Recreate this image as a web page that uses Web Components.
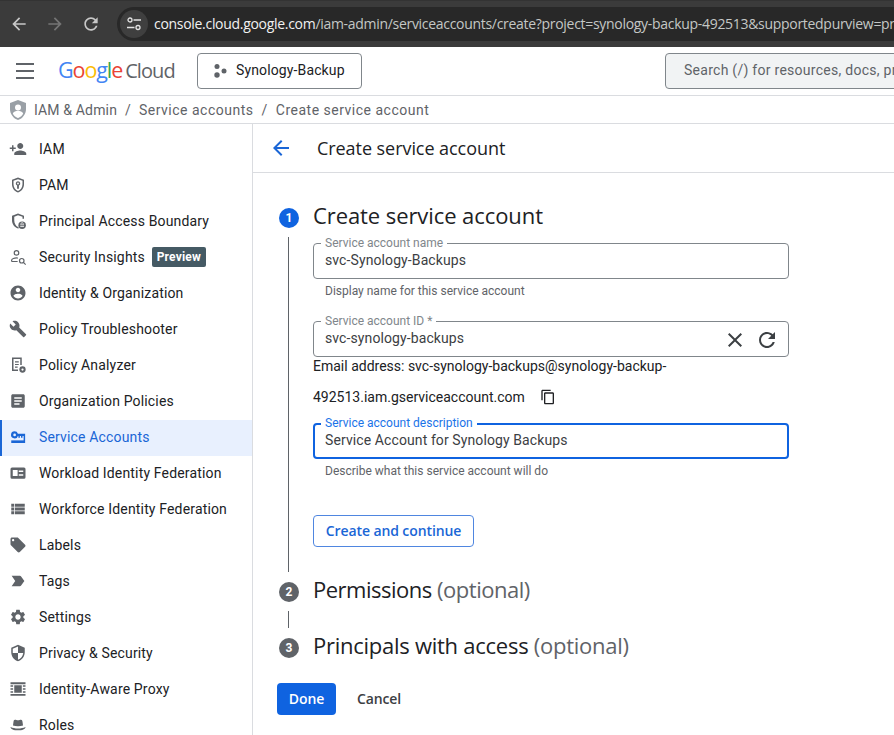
<!DOCTYPE html>
<html>
<head>
<meta charset="utf-8">
<title>Create service account</title>
<style>
  html, body { margin: 0; height: 100%; overflow: hidden; background: #fff; }
  body { font-family: Roboto, "Liberation Sans", sans-serif; }
</style>
</head>
<body>
<console-app>
  <browser-bar slot="browser"></browser-bar>
  <top-bar slot="top"></top-bar>
  <bread-crumbs slot="crumbs">
    <span style="letter-spacing:.15px">IAM &amp; Admin</span><span>Service accounts</span><span>Create service account</span>
  </bread-crumbs>
  <side-nav slot="nav">
    <nav-item icon="personAdd">IAM</nav-item>
    <nav-item icon="pam">PAM</nav-item>
    <nav-item icon="boundary">Principal Access Boundary</nav-item>
    <nav-item icon="insights">Security Insights <preview-badge>Preview</preview-badge></nav-item>
    <nav-item icon="account">Identity &amp; Organization</nav-item>
    <nav-item icon="wrench">Policy Troubleshooter</nav-item>
    <nav-item icon="analyzer">Policy Analyzer</nav-item>
    <nav-item icon="article">Organization Policies</nav-item>
    <nav-item icon="key" active>Service Accounts</nav-item>
    <nav-item icon="workload">Workload Identity Federation</nav-item>
    <nav-item icon="list">Workforce Identity Federation</nav-item>
    <nav-item icon="label">Labels</nav-item>
    <nav-item icon="tag">Tags</nav-item>
    <nav-item icon="settings">Settings</nav-item>
    <nav-item icon="security">Privacy &amp; Security</nav-item>
    <nav-item icon="proxy">Identity-Aware Proxy</nav-item>
    <nav-item icon="hat">Roles</nav-item>
  </side-nav>
  <page-header slot="main">Create service account</page-header>
  <form-step slot="main" number="1" active style="--track:-.08px">
    Create service account
    <div slot="body">
      <text-field label="Service account name" help="Display name for this service account">svc-Synology-Backups</text-field>
      <text-field label="Service account ID *" actions style="margin-top:22px">svc-synology-backups</text-field>
      <email-note>
        <span slot="first">Email address: svc-synology-backups@synology-backup-</span>
        492513.iam.gserviceaccount.com
      </email-note>
      <text-field label="Service account description" help="Describe what this service account will do" focused style="margin-top:4px">Service Account for Synology Backups</text-field>
      <action-button kind="outline" style="margin-top:36px">Create and continue</action-button>
    </div>
  </form-step>
  <form-step slot="main" number="2" short style="--track:-.49px">Permissions <small slot="extra">(optional)</small></form-step>
  <form-step slot="main" number="3" last style="--track:-.26px">Principals with access <small slot="extra">(optional)</small></form-step>
  <form-actions slot="main">
    <action-button kind="primary">Done</action-button>
    <action-button kind="text">Cancel</action-button>
  </form-actions>
</console-app>

<script>
const ICONS = {
  personAdd: '<path d="M15 12c2.21 0 4-1.79 4-4s-1.79-4-4-4-4 1.79-4 4 1.79 4 4 4zm-9-2V7H4v3H1v2h3v3h2v-3h3v-2H6zm9 4c-2.67 0-8 1.34-8 4v2h16v-2c0-2.66-5.33-4-8-4z"/>',
  pam: '<path d="M12 2 4 5v6c0 5 3.4 9.7 8 11 4.6-1.3 8-6 8-11V5l-8-3zm6 9c0 4-2.6 7.8-6 8.9-3.4-1.1-6-4.9-6-8.9V6.4l6-2.2 6 2.2V11z"/><path d="M12 7a3 3 0 0 0-1.2 5.75V17h2.4v-4.25A3 3 0 0 0 12 7zm0 4.2a1.2 1.2 0 1 1 0-2.4 1.2 1.2 0 0 1 0 2.4z"/>',
  boundary: '<path d="M12 2 4 5v6c0 5 3.4 9.7 8 11l1.2-.4-.9-1.8-.3.1c-3.1-1.2-5-5-5-8.9V6.4l5-2.2 6 2.2V9h2V5l-8-3z"/><circle cx="17.5" cy="17.5" r="5"/><path fill="#fff" d="M15 16.500h5v1.200h-5zM15 18.500h5v1h-5z"/><path fill="none" stroke="#fff" stroke-width=".9" d="M16 16.500v-.8a1.500 1.500 0 0 1 3 0v.8"/>',
  insights: '<g fill="none" stroke="currentColor" stroke-width="1.6"><circle cx="10" cy="6.5" r="3"/><path d="M3.500 18v-1.600c0-2 4-3.200 6.500-3.200.6 0 1.200.1 1.800.2M3.500 18h8"/><circle cx="17" cy="17" r="3"/><path d="m19.200 19.200 3 3"/></g>',
  account: '<path d="M12 2C6.48 2 2 6.48 2 12s4.48 10 10 10 10-4.48 10-10S17.52 2 12 2zm0 3c1.66 0 3 1.34 3 3s-1.34 3-3 3-3-1.34-3-3 1.34-3 3-3zm0 14.2c-2.5 0-4.71-1.28-6-3.22.03-1.99 4-3.08 6-3.08 1.99 0 5.97 1.09 6 3.08-1.29 1.94-3.5 3.22-6 3.22z"/>',
  wrench: '<path d="m22.7 19-9.1-9.1c.9-2.3.4-5-1.5-6.9-2-2-5-2.4-7.4-1.3L9 6 6 9 1.6 4.7C.4 7.1.9 10.1 2.9 12.1c1.9 1.9 4.6 2.4 6.9 1.5l9.1 9.1c.4.4 1 .4 1.4 0l2.3-2.3c.5-.4.5-1.1.1-1.4z"/>',
  analyzer: '<path d="M4 2h13v10h-2V4H6v14h6v2H4V2z"/><path d="M8 7h5v1.6H8zM8 10.5h5v1.6H8zM8 14h3.5v1.6H8z"/><circle cx="18" cy="18" r="4.2"/><circle cx="18" cy="18" r="1.5" fill="#fff"/>',
  article: '<path d="M19 3H5c-1.1 0-2 .9-2 2v14c0 1.1.9 2 2 2h14c1.1 0 2-.9 2-2V5c0-1.1-.9-2-2-2zm-5 14H7v-2h7v2zm3-4H7v-2h10v2zm0-4H7V7h10v2z"/>',
  key: '<path fill-rule="evenodd" d="M7.500 4.500a4.700 4.700 0 0 1 4.400 3h9.600V20H19.500v-9.500H18V13h-2v-2.500h-1.500V13h-2v-2.500h-.6A4.700 4.700 0 1 1 7.500 4.500zm0 2.900a1.800 1.800 0 1 0 0 3.600 1.800 1.800 0 0 0 0-3.600z"/><path d="M3 16.500h17V20H3z"/>',
  workload: '<path fill-rule="evenodd" d="M4 4.500h16a2 2 0 0 1 2 2v11a2 2 0 0 1-2 2H4a2 2 0 0 1-2-2v-11a2 2 0 0 1 2-2zM5 8v8h6.500V8H5zm8 .5v2h6v-2h-6zm0 5v2h6v-2h-6z"/>',
  list: '<path d="M3 14h4v-4H3v4zm0 5h4v-4H3v4zM3 9h4V5H3v4zm5 5h13v-4H8v4zm0 5h13v-4H8v4zM8 5v4h13V5H8z"/>',
  label: '<path d="m21.410 11.580-9-9C12.050 2.220 11.550 2 11 2H4c-1.100 0-2 .9-2 2v7c0 .55.22 1.050.59 1.420l9 9c.36.36.86.58 1.410.58s1.050-.22 1.410-.59l7-7c.37-.36.59-.86.59-1.410s-.23-1.060-.59-1.420zM5.500 7C4.670 7 4 6.330 4 5.500S4.670 4 5.500 4 7 4.670 7 5.500 6.330 7 5.500 7z"/>',
  tag: '<path d="m3.500 18.990 11 .01c.67 0 1.270-.33 1.630-.84L20.500 12l-4.370-6.160c-.36-.51-.96-.84-1.630-.84l-11 .01L8.340 12 3.500 18.990z"/>',
  settings: '<path d="M19.140 12.940c.04-.3.06-.61.06-.94 0-.32-.02-.64-.07-.94l2.030-1.580a.49.49 0 0 0 .12-.61l-1.920-3.320a.488.488 0 0 0-.59-.22l-2.390.96c-.5-.38-1.030-.7-1.620-.94l-.36-2.540a.484.484 0 0 0-.48-.41h-3.840c-.24 0-.43.17-.47.41l-.36 2.540c-.59.24-1.130.57-1.620.94l-2.390-.96c-.22-.08-.47 0-.59.22L2.740 8.870c-.12.21-.08.47.12.61l2.030 1.580c-.05.3-.09.63-.09.94s.02.64.07.94l-2.030 1.580a.49.49 0 0 0-.12.61l1.920 3.320c.12.22.37.29.59.22l2.390-.96c.5.38 1.030.7 1.620.94l.36 2.540c.05.24.24.41.48.41h3.840c.24 0 .44-.17.47-.41l.36-2.540c.59-.24 1.130-.56 1.620-.94l2.390.96c.22.08.47 0 .59-.22l1.920-3.320c.12-.22.07-.47-.12-.61l-2.010-1.580zM12 15.600c-1.980 0-3.600-1.620-3.600-3.600s1.620-3.600 3.600-3.600 3.600 1.620 3.600 3.600-1.620 3.600-3.600 3.600z"/>',
  security: '<path d="M12 1 3 5v6c0 5.550 3.840 10.740 9 12 5.160-1.260 9-6.450 9-12V5l-9-4zm0 10.990h7c-.53 4.120-3.280 7.790-7 8.940V12H5V6.300l7-3.110v8.800z"/>',
  proxy: '<path d="M2 3h20v2.500H2zM2 18.500h20V21H2zM7 7h10v10H7zM2 7h3.500v2H2zM2 11h3.500v2H2zM2 15h3.500v2H2zM18.500 7H22v2h-3.500zM18.500 11H22v2h-3.500zM18.500 15H22v2h-3.500z"/>',
  hat: '<path d="M8 5c1.300 0 2.300.8 4 .8S14.700 5 16 5c1.300 0 1.800 1.100 2 2.500l.7 5.300c-2 .7-4.200 1-6.700 1s-4.700-.3-6.700-1L6 7.500C6.200 6.100 6.700 5 8 5z"/><path d="M2 14.500c2.800 1.300 6.200 2 10 2s7.200-.7 10-2c0 2.900-4.500 4.500-10 4.500S2 17.400 2 14.500z"/>',
  close: '<path d="M19 6.410 17.590 5 12 10.590 6.410 5 5 6.410 10.590 12 5 17.590 6.410 19 12 13.410 17.590 19 19 17.590 13.410 12z"/>',
  refresh: '<path d="M17.650 6.350C16.200 4.900 14.210 4 12 4c-4.420 0-7.990 3.580-7.990 8s3.570 8 7.990 8c3.730 0 6.840-2.550 7.730-6h-2.080c-.82 2.330-3.040 4-5.650 4-3.310 0-6-2.690-6-6s2.690-6 6-6c1.660 0 3.140.69 4.220 1.780L13 11h7V4l-2.350 2.350z"/>',
  copy: '<path d="M16 1H4c-1.100 0-2 .9-2 2v14h2V3h12V1zm3 4H8c-1.100 0-2 .9-2 2v14c0 1.100.9 2 2 2h11c1.100 0 2-.9 2-2V7c0-1.100-.9-2-2-2zm0 16H8V7h11v14z"/>',
  back: '<path d="M20 11H7.830l5.590-5.590L12 4l-8 8 8 8 1.410-1.410L7.830 13H20v-2z"/>'
};

function svgIcon(name, size) {
  return `<svg width="${size}" height="${size}" viewBox="0 0 24 24" fill="currentColor">${ICONS[name]}</svg>`;
}

class ConsoleApp extends HTMLElement {
  constructor() {
    super();
    this.attachShadow({mode: "open"}).innerHTML = `
      <style>
        :host { display: flex; flex-direction: column; height: 735px; overflow: hidden; color: #202124; }
        .body { display: flex; flex: 1; min-height: 0; }
        main { flex: 1; min-width: 0; display: flex; flex-direction: column; }
      </style>
      <slot name="browser"></slot>
      <slot name="top"></slot>
      <slot name="crumbs"></slot>
      <div class="body">
        <slot name="nav"></slot>
        <main><slot name="main"></slot></main>
      </div>`;
  }
}

class BrowserBar extends HTMLElement {
  constructor() {
    super();
    this.attachShadow({mode: "open"}).innerHTML = `
      <style>
        :host { display: flex; align-items: center; height: 47px; background: #3b3b3b; flex: none; box-sizing: border-box; border-top: 1px solid #333; }
        .btn { width: 36px; display: flex; justify-content: center; color: #c7c7c7; flex: none; }
        .btn.off { color: #757575; }
        .nav { display: flex; padding-left: 1px; }
        .url { margin-left: 8px; flex: 1; min-width: 0; height: 34px; margin-top: -1px; background: #282828; border-radius: 17px 0 0 17px; display: flex; align-items: center; overflow: hidden; }
        .tune { width: 28px; height: 28px; margin-left: 3px; border-radius: 50%; background: #3f3f3f; color: #e3e3e3; display: flex; align-items: center; justify-content: center; flex: none; }
        .text { margin-left: 6px; font: 14px "Open Sans", Roboto, sans-serif; letter-spacing: -.3px; color: #c4c7c5; white-space: nowrap; }
        .text b { font-weight: 400; color: #f1f1f1; }
      </style>
      <div class="nav">
        <div class="btn">${svgIcon("back", 20)}</div>
        <div class="btn off">${svgIcon("back", 20).replace("<svg", '<svg style="transform:scaleX(-1)"')}</div>
        <div class="btn">${svgIcon("refresh", 20)}</div>
      </div>
      <div class="url">
        <div class="tune"><svg width="16" height="16" viewBox="0 0 16 16" fill="none" stroke="currentColor" stroke-width="1.300"><circle cx="4" cy="4" r="2"/><path d="M7.500 4H15M1 11.500h7.500"/><circle cx="12" cy="11.500" r="2"/></svg></div>
        <div class="text"><b>console.cloud.google.com</b>/iam-admin/serviceaccounts/create?project=synology-backup-492513&amp;supportedpurview=project</div>
      </div>`;
  }
}

class TopBar extends HTMLElement {
  constructor() {
    super();
    this.attachShadow({mode: "open"}).innerHTML = `
      <style>
        :host { display: flex; align-items: center; height: 49px; flex: none; box-sizing: border-box; border-bottom: 1px solid #dadce0; overflow: hidden; }
        .menu { margin-left: 16px; width: 18px; height: 12px; border-top: 2px solid #5f6368; border-bottom: 2px solid #5f6368; position: relative; flex: none; }
        .menu::after { content: ""; position: absolute; left: 0; right: 0; top: 5px; height: 2px; background: #5f6368; }
        .logo { margin-left: 24px; width: 139px; padding-bottom: 4px; font: 21.500px "Open Sans", Roboto, sans-serif; letter-spacing: -1.1px; white-space: nowrap; flex: none; }
        .logo .g { font-weight: 500; }
        .logo .c { color: #5f6368; margin-left: 3px; font-size: 20px; letter-spacing: -.9px; }
        .project { width: 165px; height: 36px; box-sizing: border-box; border: 1px solid #80868b; border-radius: 4px; display: flex; align-items: center; padding: 0 0 2px 14px; font-size: 14px; letter-spacing: .13px; color: #202124; flex: none; }
        .project svg { margin: 2px 8px 0 0; }
        .search { margin-left: 303px; width: 300px; height: 36px; flex: none; box-sizing: border-box; border: 1px solid #80868b; border-radius: 4px; background: #f1f3f4; display: flex; align-items: center; padding: 0 0 2px 18px; font-size: 14px; letter-spacing: .27px; color: #5f6368; white-space: nowrap; }
      </style>
      <div class="menu"></div>
      <div class="logo"><span class="g"><span style="color:#4285f4">G</span><span style="color:#ea4335">o</span><span style="color:#fbbc05">o</span><span style="color:#4285f4">g</span><span style="color:#34a853">l</span><span style="color:#ea4335">e</span></span><span class="c">Cloud</span></div>
      <div class="project">
        <svg width="16" height="16" viewBox="0 0 16 16" fill="#5f6368"><circle cx="5" cy="3.500" r="2.500"/><circle cx="5" cy="12" r="2.700"/><circle cx="12" cy="8" r="2.500"/></svg>
        Synology-Backup
      </div>
      <div class="search">Search (/) for resources, docs, products, and more</div>`;
  }
}

class BreadCrumbs extends HTMLElement {
  constructor() {
    super();
    this.attachShadow({mode: "open"}).innerHTML = `
      <style>
        :host { display: flex; align-items: center; height: 28px; flex: none; box-sizing: border-box; border-bottom: 1px solid #dadce0; padding-left: 9px; font-size: 14px; letter-spacing: .5px; color: #5f6368; white-space: nowrap; }
        svg { margin-right: 7px; flex: none; }
        ::slotted(span:not(:last-child))::after { content: "/"; margin: 0 8px; }
      </style>
      <svg width="18" height="20" viewBox="0 0 18 20"><path fill="#9aa0a6" d="M9 0 1 3v6c0 5 3.400 9.600 8 11 4.600-1.400 8-6 8-11V3L9 0z"/><circle cx="9" cy="7.500" r="3" fill="#fff"/><path fill="#fff" d="M3.800 13.500c.8-1.800 3-2.700 5.200-2.700s4.400.9 5.200 2.700C13.800 15 11 17.500 9 18c-2-.5-4.800-3-5.200-4.500z"/></svg>
      <slot></slot>`;
  }
}

class SideNav extends HTMLElement {
  constructor() {
    super();
    this.attachShadow({mode: "open"}).innerHTML = `
      <style>
        :host { display: flex; flex-direction: column; width: 253px; flex: none; box-sizing: border-box; border-right: 1px solid #dadce0; padding-top: 8px; }
      </style>
      <slot></slot>`;
  }
}

class NavItem extends HTMLElement {
  connectedCallback() {
    if (this.shadowRoot) return;
    this.attachShadow({mode: "open"}).innerHTML = `
      <style>
        :host { display: flex; align-items: center; height: 36px; flex: none; box-sizing: border-box; padding: 0 0 2px 9px; font-size: 14px; letter-spacing: .16px; color: #202124; white-space: nowrap; }
        :host([active]) { background: #e8f0fe; color: #1a66d6; padding-left: 7px; border-left: 2px solid #1a66d6; }
        .icon { width: 18px; height: 18px; margin-right: 12px; color: #5f6368; flex: none; }
        :host([active]) .icon { color: #1a66d6; }
        svg { display: block; }
      </style>
      <span class="icon">${svgIcon(this.getAttribute("icon"), 18)}</span>
      <slot></slot>`;
  }
}

class PreviewBadge extends HTMLElement {
  constructor() {
    super();
    this.attachShadow({mode: "open"}).innerHTML = `
      <style>
        :host { display: inline-flex; align-items: center; justify-content: center; box-sizing: border-box; width: 54px; height: 20px; margin-left: 7px; background: #455a64; color: #fff; border-radius: 2px; font-size: 12px; font-weight: 700; letter-spacing: .2px; }
      </style>
      <slot></slot>`;
  }
}

class PageHeader extends HTMLElement {
  constructor() {
    super();
    this.attachShadow({mode: "open"}).innerHTML = `
      <style>
        :host { display: flex; align-items: center; height: 49px; flex: none; box-sizing: border-box; border-bottom: 1px solid #dadce0; padding: 0 0 1px 16px; font: 18px "Open Sans", Roboto, sans-serif; letter-spacing: -.06px; color: #202124; margin-bottom: 25px; }
        .back { color: #1a66d6; margin-right: 24px; display: flex; }
      </style>
      <span class="back">${svgIcon("back", 24)}</span>
      <slot></slot>`;
  }
}

class FormStep extends HTMLElement {
  connectedCallback() {
    if (this.shadowRoot) return;
    this.attachShadow({mode: "open"}).innerHTML = `
      <style>
        :host { display: block; flex: none; padding-left: 24px; }
        .head { display: flex; align-items: center; height: 40px; font: 22px "Open Sans", Roboto, sans-serif; letter-spacing: var(--track, 0); color: #202124; white-space: nowrap; }
        .title { padding-bottom: 7px; }
        .num { width: 20px; height: 20px; margin: 0 14px 0 2px; border-radius: 50%; background: #5f6368; color: #fff; font: 700 12px Roboto, sans-serif; letter-spacing: 0; display: flex; align-items: center; justify-content: center; flex: none; }
        :host([active]) .num { background: #0f63e0; }
        ::slotted(small) { font-size: 22px; color: #5f6368; }
        .rail { margin: -1px 0 0 11px; padding: 6px 0 25px 24px; border-left: 1px solid #5f6368; }
        :host([short]) .rail { height: 17px; padding: 0; box-sizing: border-box; }
        :host([last]) .rail { display: none; }
      </style>
      <div class="head"><span class="num">${this.getAttribute("number")}</span><span class="title"><slot></slot> <slot name="extra"></slot></span></div>
      <div class="rail"><slot name="body"></slot></div>`;
  }
}

class TextField extends HTMLElement {
  connectedCallback() {
    if (this.shadowRoot) return;
    const help = this.getAttribute("help");
    const actions = this.hasAttribute("actions");
    this.attachShadow({mode: "open"}).innerHTML = `
      <style>
        :host { display: block; width: 476px; font-size: 14px; letter-spacing: .1px; }
        .box { position: relative; height: 36px; box-sizing: border-box; border: 1px solid #80868b; border-radius: 4px; padding: 0 9px 2px 11px; display: flex; align-items: center; color: #3c4043; }
        :host([focused]) .box { border: 2px solid #0f63e0; padding: 0 8px 2px 10px; }
        .label { position: absolute; top: -8px; left: 7px; padding: 0 4px; background: #fff; font-size: 12px; line-height: 14px; letter-spacing: 0; color: #80868b; white-space: nowrap; }
        :host([focused]) .label { color: #1a73e8; top: -9px; left: 6px; }
        .value { flex: 1; }
        .act { display: flex; gap: 8px; color: #3c4043; margin-bottom: -4px; }
        .help { margin: 4px 0 0 12px; font-size: 12px; line-height: 16px; letter-spacing: 0; color: #5f6368; }
      </style>
      <div class="box">
        <span class="label">${this.getAttribute("label")}</span>
        <span class="value"><slot></slot></span>
        ${actions ? `<span class="act">${svgIcon("close", 24)}${svgIcon("refresh", 24)}</span>` : ""}
      </div>
      ${help ? `<div class="help">${help}</div>` : ""}`;
  }
}

class EmailNote extends HTMLElement {
  constructor() {
    super();
    this.attachShadow({mode: "open"}).innerHTML = `
      <style>
        :host { display: block; font-size: 14px; letter-spacing: 0; color: #202124; white-space: nowrap; }
        .first { height: 18px; line-height: 18px; }
        .second { height: 44px; display: flex; align-items: center; }
        .second svg { margin-left: 15px; color: #202124; }
      </style>
      <div class="first"><slot name="first"></slot></div>
      <div class="second"><slot></slot>${svgIcon("copy", 16)}</div>`;
  }
}

class ActionButton extends HTMLElement {
  constructor() {
    super();
    this.attachShadow({mode: "open"}).innerHTML = `
      <style>
        :host { display: inline-flex; align-items: center; justify-content: center; box-sizing: border-box; height: 32px; padding-bottom: 2px; border-radius: 4px; font: 600 14px "Open Sans", Roboto, sans-serif; letter-spacing: -.1px; white-space: nowrap; }
        :host([kind="outline"]) { width: 161px; border: 1px solid #4f86e0; color: #1a66d6; }
        :host([kind="primary"]) { width: 59px; background: #0f63e0; color: #fff; }
        :host([kind="text"]) { width: 86px; color: #3c4043; }
      </style>
      <slot></slot>`;
  }
}

class FormActions extends HTMLElement {
  constructor() {
    super();
    this.attachShadow({mode: "open"}).innerHTML = `
      <style>
        :host { display: flex; flex: none; margin: 15px 0 0 24px; }
      </style>
      <slot></slot>`;
  }
}

customElements.define("console-app", ConsoleApp);
customElements.define("browser-bar", BrowserBar);
customElements.define("top-bar", TopBar);
customElements.define("bread-crumbs", BreadCrumbs);
customElements.define("side-nav", SideNav);
customElements.define("nav-item", NavItem);
customElements.define("preview-badge", PreviewBadge);
customElements.define("page-header", PageHeader);
customElements.define("form-step", FormStep);
customElements.define("text-field", TextField);
customElements.define("email-note", EmailNote);
customElements.define("action-button", ActionButton);
customElements.define("form-actions", FormActions);
</script>
</body>
</html>
